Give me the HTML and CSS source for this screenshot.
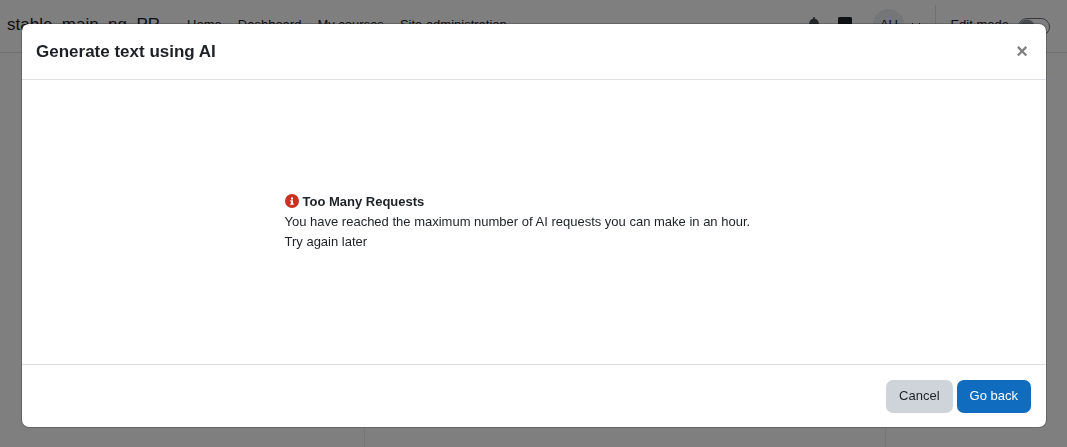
FILE: index.html
```html
<!DOCTYPE html>
<html lang="en">

<head>
    <meta charset="UTF-8">
    <meta name="viewport" content="width=device-width, initial-scale=1.0">
    <title>Generate text using AI</title>
    <link rel="stylesheet" href="styles.css">
</head>

<body>
    <header class="navbar">
        <a class="brand" href="#">stable_main_ng_PR</a>
        <nav class="primary-nav">
            <a href="#">Home</a>
            <a href="#">Dashboard</a>
            <a href="#">My courses</a>
            <a href="#">Site administration</a>
        </nav>
        <div class="user-nav">
            <button class="icon-btn" type="button" aria-label="Notifications">
                <svg width="14" height="16" viewBox="0 0 14 16">
                    <path fill="#495057" d="M7 0a1 1 0 0 0-1 1v.7C3.700 2.200 2.200 4 2.200 6.500c0 3-.8 4.200-1.700 5.200-.7.800-.2 1.300.5 1.300h12c.7 0 1.200-.5.500-1.300-.9-1-1.700-2.200-1.700-5.200C11.800 4 10.300 2.200 8 1.700V1a1 1 0 0 0-1-1zM5 14a2 2 0 0 0 4 0z" />
                </svg>
            </button>
            <button class="icon-btn" type="button" aria-label="Messages">
                <svg width="14" height="16" viewBox="0 0 14 16">
                    <path fill="#1d2125" d="M1.500 0h11A1.500 1.500 0 0 1 14 1.500v9a1.500 1.500 0 0 1-1.500 1.500H8l-4 4v-4H1.500A1.500 1.500 0 0 1 0 10.500v-9A1.500 1.500 0 0 1 1.500 0z" />
                </svg>
            </button>
            <button class="user-menu" type="button" aria-label="User menu">
                <span class="avatar">AU</span>
                <svg width="10" height="6" viewBox="0 0 10 6">
                    <path fill="none" stroke="#1d2125" d="M1 1l4 4 4-4" />
                </svg>
            </button>
            <div class="edit-switch">
                <label for="edit-mode">Edit mode</label>
                <input id="edit-mode" type="checkbox" role="switch">
            </div>
        </div>
    </header>
    <main class="page">
        <div class="page-content"></div>
    </main>

    <div class="backdrop">
        <div class="modal" role="dialog" aria-modal="true" aria-labelledby="modal-title">
            <div class="modal-header">
                <h5 id="modal-title">Generate text using AI</h5>
                <button class="close" type="button" aria-label="Close">&times;</button>
            </div>
            <div class="modal-body">
                <div class="error-message">
                    <div class="error-title">
                        <svg width="14" height="14" viewBox="0 0 14 14">
                            <circle cx="7" cy="7" r="7" fill="#ca3120" />
                            <path fill="#fff" d="M6 3.500h2v2H6zM5.200 6.200H8v3.300h.8v1.300H5.200V9.500H6v-2h-.8z" />
                        </svg>
                        <strong>Too Many Requests</strong>
                    </div>
                    <p>You have reached the maximum number of AI requests you can make in an hour.</p>
                    <p>Try again later</p>
                </div>
            </div>
            <div class="modal-footer">
                <button class="btn btn-secondary" type="button">Cancel</button>
                <button class="btn btn-primary" type="button">Go back</button>
            </div>
        </div>
    </div>
</body>

</html>
```

FILE: styles.css
```css
* {
    margin: 0;
    padding: 0;
    box-sizing: border-box;
}

body {
    display: flex;
    flex-direction: column;
    min-height: 100vh;
    font-family: "Liberation Sans", Arial, sans-serif;
    font-size: 13px;
    line-height: 20px;
    color: #1d2125;
    background-color: #fff;
}

button {
    font: inherit;
    color: inherit;
    border: none;
    background: none;
    cursor: pointer;
}

.navbar {
    display: flex;
    align-items: center;
    height: 53px;
    padding: 0 17px 3px 7px;
    border-bottom: 1px solid #dee2e6;
}

.brand {
    margin-right: 27px;
    font-size: 17px;
    color: inherit;
    text-decoration: none;
}

.primary-nav {
    display: flex;
    gap: 16px;
}

.primary-nav a {
    color: inherit;
    text-decoration: none;
}

.user-nav {
    display: flex;
    align-items: center;
    margin-left: auto;
}

.icon-btn {
    display: flex;
    margin-right: 17px;
}

.user-menu {
    display: flex;
    align-items: center;
    gap: 7px;
    margin-left: 4px;
}

.avatar {
    width: 31px;
    line-height: 31px;
    border-radius: 50%;
    text-align: center;
    background-color: #e9ecef;
}

.edit-switch {
    display: flex;
    align-items: center;
    gap: 9px;
    height: 40px;
    margin-left: 14px;
    padding-left: 14px;
    border-left: 1px solid #dee2e6;
}

.edit-switch input {
    appearance: none;
    width: 32px;
    height: 18px;
    margin-top: 4px;
    border: 1px solid #6a737b;
    border-radius: 9px;
    background: radial-gradient(circle at 8px 8px, #8f959e 7px, transparent 8px);
}

.page {
    display: flex;
    flex: 1;
    justify-content: center;
    padding: 0 181px 0 364px;
}

.page-content {
    flex: 1;
    border: solid #eee;
    border-width: 0 1px;
}

.backdrop {
    position: fixed;
    inset: 0;
    padding: 23px 20px 19px 21px;
    background-color: rgba(0, 0, 0, 0.5);
}

.modal {
    display: flex;
    flex-direction: column;
    height: 100%;
    border: 1px solid rgba(0, 0, 0, 0.2);
    border-radius: 8px;
    background-color: #fff;
    background-clip: padding-box;
}

.modal-header {
    display: flex;
    align-items: center;
    justify-content: space-between;
    padding: 14px;
    border-bottom: 1px solid #dee2e6;
}

.modal-header h5 {
    font-size: 17px;
    line-height: 27px;
}

.close {
    width: 20px;
    padding-bottom: 2px;
    font-size: 20px;
    font-weight: bold;
    line-height: 20px;
    color: #808080;
}

.modal-body {
    display: flex;
    flex: 1;
    align-items: center;
    justify-content: center;
    padding: 0 15px 0 0;
}

.error-message {
    width: 100%;
    max-width: 484px;
}

.error-title {
    display: flex;
    align-items: center;
    gap: 4px;
}

.error-title svg {
    margin-bottom: 2px;
}

.modal-footer {
    display: flex;
    justify-content: flex-end;
    gap: 4px;
    padding: 15px 15px 14px;
    border-top: 1px solid #dee2e6;
}

.btn {
    padding: 6px 13px 7px;
    border-radius: 7px;
}

.btn-secondary {
    background-color: #ced4da;
}

.btn-primary {
    color: #fff;
    background-color: #0f6cbf;
}
```
